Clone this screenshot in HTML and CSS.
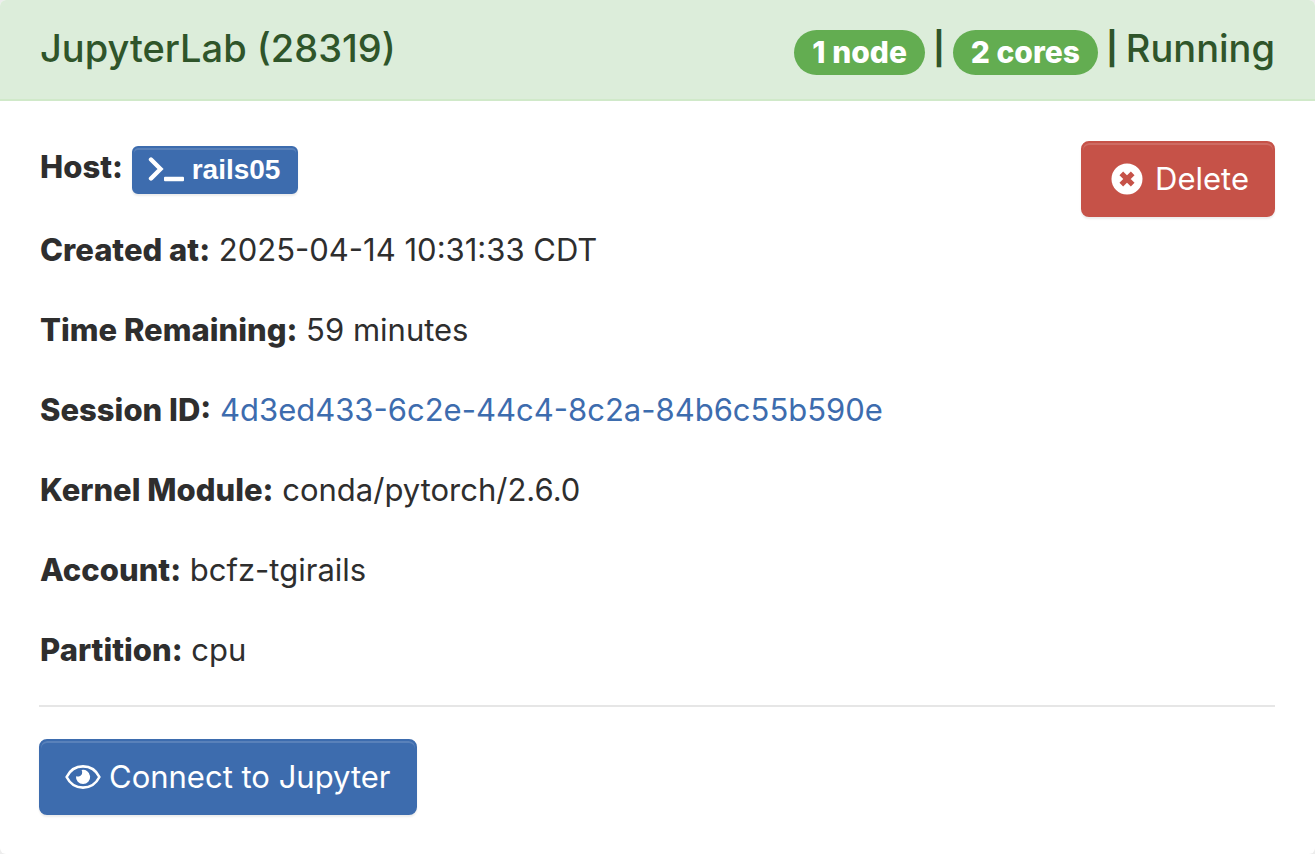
FILE: index.html
```html
<!DOCTYPE html>
<html lang="en">
<head>
<meta charset="utf-8">
<meta name="viewport" content="width=device-width, initial-scale=1">
<title>JupyterLab session</title>
<link rel="stylesheet" href="styles.css">
</head>
<body>
<main class="card">
  <header class="card-header">
    <h1 class="title">JupyterLab (28319)</h1>
    <div class="status"><span class="badge">1 node</span> <span class="pipe">|</span> <span class="badge">2 cores</span> <span class="pipe">|</span> <span>Running</span></div>
  </header>
  <div class="card-body">
    <div class="info">
      <div class="details">
        <p><strong>Host:</strong> <a class="btn btn-small" href="#"><svg class="icon-terminal" viewBox="0 0 36 28" aria-hidden="true"><path d="M3 3.5 L12.5 13 L3 22.5" fill="none" stroke="currentColor" stroke-width="4.4" stroke-linecap="round" stroke-linejoin="miter"/><rect x="16" y="20.8" width="20" height="4.4" rx="1" fill="currentColor"/></svg>rails05</a></p>
        <p><strong>Created at:</strong> 2025-04-14 10:31:33 CDT</p>
        <p><strong>Time Remaining:</strong> 59 minutes</p>
        <p><strong>Session ID:</strong> <a class="link" href="#">4d3ed433-6c2e-44c4-8c2a-84b6c55b590e</a></p>
        <p><strong>Kernel Module:</strong> conda/pytorch/2.6.0</p>
        <p><strong>Account:</strong> bcfz-tgirails</p>
        <p><strong>Partition:</strong> cpu</p>
      </div>
      <button class="btn btn-danger" type="button"><svg class="icon-delete" viewBox="0 0 32 32" aria-hidden="true"><circle cx="16" cy="16" r="15.5" fill="currentColor"/><path d="M10.3 10.3 L21.7 21.7 M21.7 10.3 L10.3 21.7" stroke="#c65248" stroke-width="5.2" stroke-linecap="butt"/></svg>Delete</button>
    </div>
    <hr class="divider">
    <button class="btn btn-primary" type="button"><svg class="icon-eye" viewBox="0 0 36 26" aria-hidden="true"><path d="M1.6 13 C5 6.2 11.2 2.4 18 2.4 C24.8 2.4 31 6.2 34.4 13 C31 19.8 24.8 23.6 18 23.6 C11.2 23.6 5 19.8 1.6 13 Z" fill="none" stroke="currentColor" stroke-width="2.6" stroke-linejoin="round"/><path d="M16.6 6 A7.1 7.1 0 1 1 11 12.2 C15 13.6 18.6 10.4 16.6 6 Z" fill="currentColor"/></svg>Connect to Jupyter</button>
  </div>
</main>
</body>
</html>
```
FILE: styles.css
```css
* {
  box-sizing: border-box;
}

body {
  margin: 0;
  background: #ededed;
  color: #2e2e2e;
  font: 31px/48px Inter, "Liberation Sans", sans-serif;
}

strong {
  font-weight: 800;
}

.card {
  min-height: 100vh;
  background: #fff;
  border-radius: 6px;
  overflow: hidden;
}

.card-header {
  display: flex;
  justify-content: space-between;
  align-items: flex-start;
  padding: 24px 40px 24px;
  background: #dcedda;
  border-bottom: 2px solid #d0e9c9;
  color: #2f552a;
  font-size: 38px;
  font-weight: 500;
  line-height: 49px;
}

.title {
  margin: 0;
  font: inherit;
}

.status {
  display: flex;
  align-items: flex-start;
  gap: 8px;
}

.badge {
  margin-top: 6px;
  padding: 0 18px;
  border-radius: 23px;
  background: #63ad51;
  color: #fff;
  font-size: 30px;
  font-weight: 800;
  line-height: 45px;
}

.pipe {
  font-size: 32px;
  font-weight: 700;
}

.card-body {
  padding: 40px 40px 39px 39px;
}

.info {
  display: flex;
  justify-content: space-between;
  align-items: flex-start;
}

.details {
  padding: 2px 0 0 1px;
}

.details p {
  margin: 0 0 32px;
}

.link {
  color: #3d6cae;
  text-decoration: none;
}

.btn {
  display: inline-flex;
  align-items: center;
  border: 2px solid #3d6cae;
  border-radius: 8px;
  background: #3d6cae;
  box-shadow: inset 0 2px 0 rgba(255, 255, 255, 0.15), 0 2px 2px rgba(0, 0, 0, 0.08);
  color: #fff;
  font: inherit;
  text-decoration: none;
  white-space: nowrap;
}

.btn-small {
  padding: 0 16px 0 14px;
  border-radius: 6px;
  vertical-align: middle;
  font: bold 28px/44px "Liberation Sans", Arial, sans-serif;
}

.btn-danger,
.btn-primary {
  padding: 12px 24px;
}

.btn-danger {
  padding-left: 28px;
  border-color: #c65248;
  background: #c65248;
}

.icon-terminal {
  width: 36px;
  height: 28px;
  margin-right: 8px;
}

.icon-delete {
  width: 32px;
  height: 32px;
  margin-right: 12px;
}

.icon-eye {
  width: 36px;
  height: 26px;
  margin-right: 8px;
}

.divider {
  height: 2px;
  margin: -1px 0 32px;
  border: 0;
  background: #e6e6e6;
}
```
